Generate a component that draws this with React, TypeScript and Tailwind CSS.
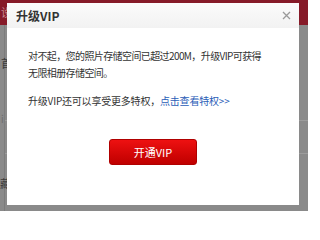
import React from "react";

const cjk = { fontFamily: '"Noto Sans CJK SC", "Noto Sans", sans-serif' };

function CloseIcon() {
  return (
    <svg width="9" height="9" viewBox="0 0 9 9" className="text-[#9a9a9a]">
      <path d="M1 1 L8 8 M8 1 L1 8" stroke="currentColor" strokeWidth="1.3" fill="none" />
    </svg>
  );
}

export default function App() {
  return (
    <div className="relative w-[308px] h-[211px] overflow-hidden bg-[#8a8a8a]" style={cjk}>
      {/* page behind the overlay */}
      <div className="flex flex-col h-full">
        <div className="h-[25px] bg-[#861a28] text-[11px] leading-[25px] text-[#c98a92] pl-[1px]">设</div>
        <div className="relative flex-1 border-l border-[#7c7c7c] ml-[4px]">
          <div className="absolute left-[-4px] top-[30px] text-[11px] text-[#3a3a3a]">首</div>
          <div className="absolute left-[-4px] top-[86px] text-[10px] text-[#6e6e6e]">i</div>
          <div className="absolute left-0 right-0 top-[95px] h-px bg-[#9c9c9c]" />
          <div className="absolute left-0 right-0 top-[128px] h-px bg-[#9c9c9c]" />
          <div className="absolute left-[-5px] top-[150px] text-[11px] text-[#3a3a3a]">藏</div>
        </div>
      </div>

      {/* dialog */}
      <div className="absolute left-[7px] top-[3px] w-[292px] h-[202px] bg-white flex flex-col">
        <div className="h-[25px] flex items-center justify-between pl-[9px] pr-[8px] bg-gradient-to-b from-[#fbfbfb] to-[#f2f2f2]">
          <span className="text-[12px] font-bold text-[#333]">升级VIP</span>
          <CloseIcon />
        </div>
        <div className="flex flex-col pl-[21px] pr-[10px] pt-[19px] text-[10px] leading-[17px] text-[#333]">
          <p className="tracking-[-0.6px] whitespace-nowrap">
            对不起，您的照片存储空间已超过200M，升级VIP可获得
            <br />
            无限相册存储空间。
          </p>
          <p className="mt-[11px] tracking-[-0.2px] whitespace-nowrap">
            升级VIP还可以享受更多特权，<span className="text-[#2a5db7]">点击查看特权&gt;&gt;</span>
          </p>
        </div>
        <div className="flex justify-center mt-[30px]">
          <button className="w-[88px] h-[26px] rounded-[3px] bg-gradient-to-b from-[#ee1111] to-[#bf0000] border border-[#b00000] text-white text-[11px]">
            开通VIP
          </button>
        </div>
      </div>
    </div>
  );
}
